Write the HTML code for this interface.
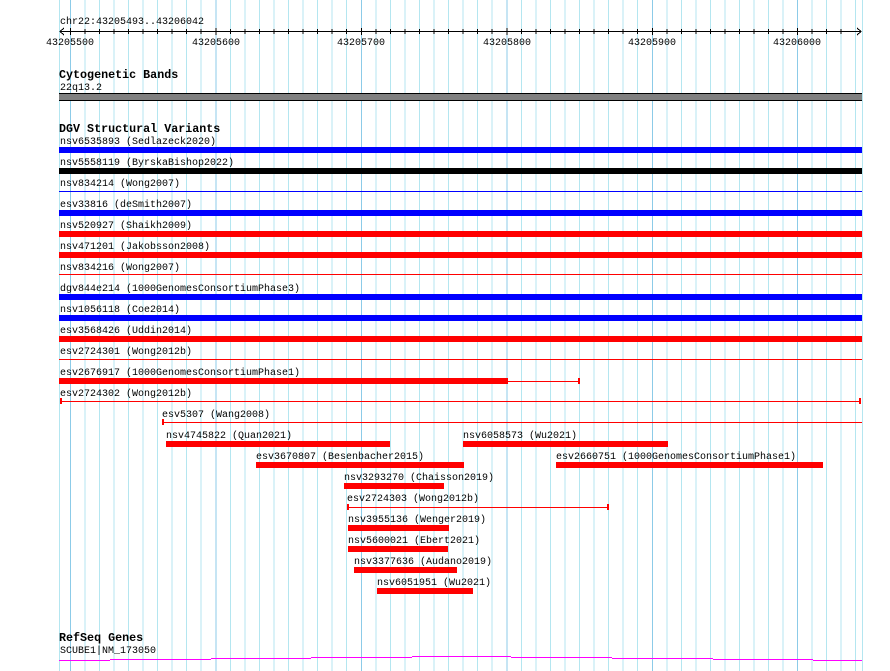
<!DOCTYPE html>
<html><head><meta charset="utf-8"><style>
html,body{margin:0;padding:0;background:#fff;width:890px;height:671px;overflow:hidden}
svg{display:block}
text{font-family:"Liberation Mono",monospace;font-size:10px;fill:#000}
.b{font-weight:bold;font-size:11.7px}
</style></head><body>
<svg width="890" height="671" viewBox="0 0 890 671" xmlns="http://www.w3.org/2000/svg" shape-rendering="crispEdges">
<g id="grid">
<line x1="59.5" y1="0" x2="59.5" y2="671" stroke="#b4e6f0"/>
<line x1="862.5" y1="0" x2="862.5" y2="671" stroke="#b4e6f0"/>
</g>
<script>
</script>
<g stroke="#b4e6f0">
<line x1="70.5" y1="0" x2="70.5" y2="671" stroke="#8ccbe8"/>
<line x1="85" y1="0" x2="85" y2="671"/><line x1="99.5" y1="0" x2="99.5" y2="671"/><line x1="114" y1="0" x2="114" y2="671"/><line x1="128.5" y1="0" x2="128.5" y2="671"/><line x1="143" y1="0" x2="143" y2="671"/><line x1="157.5" y1="0" x2="157.5" y2="671"/><line x1="172" y1="0" x2="172" y2="671"/><line x1="186.5" y1="0" x2="186.5" y2="671"/><line x1="201" y1="0" x2="201" y2="671"/>
<line x1="216" y1="0" x2="216" y2="671" stroke="#8ccbe8"/>
<line x1="230.5" y1="0" x2="230.5" y2="671"/><line x1="245" y1="0" x2="245" y2="671"/><line x1="259.5" y1="0" x2="259.5" y2="671"/><line x1="274" y1="0" x2="274" y2="671"/><line x1="288.5" y1="0" x2="288.5" y2="671"/><line x1="303" y1="0" x2="303" y2="671"/><line x1="317.5" y1="0" x2="317.5" y2="671"/><line x1="332" y1="0" x2="332" y2="671"/><line x1="346.5" y1="0" x2="346.5" y2="671"/>
<line x1="361.5" y1="0" x2="361.5" y2="671" stroke="#8ccbe8"/>
<line x1="376" y1="0" x2="376" y2="671"/><line x1="390.5" y1="0" x2="390.5" y2="671"/><line x1="405" y1="0" x2="405" y2="671"/><line x1="419.5" y1="0" x2="419.5" y2="671"/><line x1="434" y1="0" x2="434" y2="671"/><line x1="448.5" y1="0" x2="448.5" y2="671"/><line x1="463" y1="0" x2="463" y2="671"/><line x1="477.5" y1="0" x2="477.5" y2="671"/><line x1="492" y1="0" x2="492" y2="671"/>
<line x1="507" y1="0" x2="507" y2="671" stroke="#8ccbe8"/>
<line x1="521.5" y1="0" x2="521.5" y2="671"/><line x1="536" y1="0" x2="536" y2="671"/><line x1="550.5" y1="0" x2="550.5" y2="671"/><line x1="565" y1="0" x2="565" y2="671"/><line x1="579.5" y1="0" x2="579.5" y2="671"/><line x1="594" y1="0" x2="594" y2="671"/><line x1="608.5" y1="0" x2="608.5" y2="671"/><line x1="623" y1="0" x2="623" y2="671"/><line x1="637.5" y1="0" x2="637.5" y2="671"/>
<line x1="652.5" y1="0" x2="652.5" y2="671" stroke="#8ccbe8"/>
<line x1="667" y1="0" x2="667" y2="671"/><line x1="681.5" y1="0" x2="681.5" y2="671"/><line x1="696" y1="0" x2="696" y2="671"/><line x1="710.5" y1="0" x2="710.5" y2="671"/><line x1="725" y1="0" x2="725" y2="671"/><line x1="739.5" y1="0" x2="739.5" y2="671"/><line x1="754" y1="0" x2="754" y2="671"/><line x1="768.5" y1="0" x2="768.5" y2="671"/><line x1="783" y1="0" x2="783" y2="671"/>
<line x1="797.5" y1="0" x2="797.5" y2="671" stroke="#8ccbe8"/>
<line x1="812" y1="0" x2="812" y2="671"/><line x1="826.5" y1="0" x2="826.5" y2="671"/><line x1="841" y1="0" x2="841" y2="671"/><line x1="855.5" y1="0" x2="855.5" y2="671"/>
</g>

<!-- ruler -->
<text x="60" y="24">chr22:43205493..43206042</text>
<line x1="60" y1="31.5" x2="861" y2="31.5" stroke="#000"/>
<path d="M64 28 L60 31.5 L64 35 M857 28 L861 31.5 L857 35" stroke="#000" fill="none"/>
<g stroke="#000">
<line x1="70.5" y1="28" x2="70.5" y2="35"/><line x1="85" y1="29" x2="85" y2="34"/><line x1="99.5" y1="29" x2="99.5" y2="34"/><line x1="114" y1="29" x2="114" y2="34"/><line x1="128.5" y1="29" x2="128.5" y2="34"/><line x1="143" y1="29" x2="143" y2="34"/><line x1="157.5" y1="29" x2="157.5" y2="34"/><line x1="172" y1="29" x2="172" y2="34"/><line x1="186.5" y1="29" x2="186.5" y2="34"/><line x1="201" y1="29" x2="201" y2="34"/>
<line x1="216" y1="28" x2="216" y2="35"/><line x1="230.5" y1="29" x2="230.5" y2="34"/><line x1="245" y1="29" x2="245" y2="34"/><line x1="259.5" y1="29" x2="259.5" y2="34"/><line x1="274" y1="29" x2="274" y2="34"/><line x1="288.5" y1="29" x2="288.5" y2="34"/><line x1="303" y1="29" x2="303" y2="34"/><line x1="317.5" y1="29" x2="317.5" y2="34"/><line x1="332" y1="29" x2="332" y2="34"/><line x1="346.5" y1="29" x2="346.5" y2="34"/>
<line x1="361.5" y1="28" x2="361.5" y2="35"/><line x1="376" y1="29" x2="376" y2="34"/><line x1="390.5" y1="29" x2="390.5" y2="34"/><line x1="405" y1="29" x2="405" y2="34"/><line x1="419.5" y1="29" x2="419.5" y2="34"/><line x1="434" y1="29" x2="434" y2="34"/><line x1="448.5" y1="29" x2="448.5" y2="34"/><line x1="463" y1="29" x2="463" y2="34"/><line x1="477.5" y1="29" x2="477.5" y2="34"/><line x1="492" y1="29" x2="492" y2="34"/>
<line x1="507" y1="28" x2="507" y2="35"/><line x1="521.5" y1="29" x2="521.5" y2="34"/><line x1="536" y1="29" x2="536" y2="34"/><line x1="550.5" y1="29" x2="550.5" y2="34"/><line x1="565" y1="29" x2="565" y2="34"/><line x1="579.5" y1="29" x2="579.5" y2="34"/><line x1="594" y1="29" x2="594" y2="34"/><line x1="608.5" y1="29" x2="608.5" y2="34"/><line x1="623" y1="29" x2="623" y2="34"/><line x1="637.5" y1="29" x2="637.5" y2="34"/>
<line x1="652.5" y1="28" x2="652.5" y2="35"/><line x1="667" y1="29" x2="667" y2="34"/><line x1="681.5" y1="29" x2="681.5" y2="34"/><line x1="696" y1="29" x2="696" y2="34"/><line x1="710.5" y1="29" x2="710.5" y2="34"/><line x1="725" y1="29" x2="725" y2="34"/><line x1="739.5" y1="29" x2="739.5" y2="34"/><line x1="754" y1="29" x2="754" y2="34"/><line x1="768.5" y1="29" x2="768.5" y2="34"/><line x1="783" y1="29" x2="783" y2="34"/>
<line x1="797.5" y1="28" x2="797.5" y2="35"/><line x1="812" y1="29" x2="812" y2="34"/><line x1="826.5" y1="29" x2="826.5" y2="34"/><line x1="841" y1="29" x2="841" y2="34"/>
</g>
<g text-anchor="middle">
<text x="70" y="45">43205500</text><text x="216" y="45">43205600</text><text x="361" y="45">43205700</text><text x="507" y="45">43205800</text><text x="652" y="45">43205900</text><text x="797" y="45">43206000</text>
</g>

<!-- cytoband -->
<text class="b" x="59" y="78">Cytogenetic Bands</text>
<text x="60" y="90">22q13.2</text>
<rect x="59" y="93" width="803" height="8" fill="#000"/>
<rect x="59" y="94" width="803" height="6" fill="#808080"/>

<!-- DGV -->
<text class="b" x="59" y="132">DGV Structural Variants</text>
<text x="60" y="144">nsv6535893 (Sedlazeck2020)</text>
<rect x="59" y="147" width="803" height="6" fill="#0000ff"/>
<text x="60" y="165">nsv5558119 (ByrskaBishop2022)</text>
<rect x="59" y="168" width="803" height="6" fill="#000"/>
<text x="60" y="186">nsv834214 (Wong2007)</text>
<rect x="59" y="191" width="803" height="1" fill="#0000ff"/>
<text x="60" y="207">esv33816 (deSmith2007)</text>
<rect x="59" y="210" width="803" height="6" fill="#0000ff"/>
<text x="60" y="228">nsv520927 (Shaikh2009)</text>
<rect x="59" y="231" width="803" height="6" fill="#ff0000"/>
<text x="60" y="249">nsv471201 (Jakobsson2008)</text>
<rect x="59" y="252" width="803" height="6" fill="#ff0000"/>
<text x="60" y="270">nsv834216 (Wong2007)</text>
<rect x="59" y="274" width="803" height="1" fill="#ff0000"/>
<text x="60" y="291">dgv844e214 (1000GenomesConsortiumPhase3)</text>
<rect x="59" y="294" width="803" height="6" fill="#0000ff"/>
<text x="60" y="312">nsv1056118 (Coe2014)</text>
<rect x="59" y="315" width="803" height="6" fill="#0000ff"/>
<text x="60" y="333">esv3568426 (Uddin2014)</text>
<rect x="59" y="336" width="803" height="6" fill="#ff0000"/>
<text x="60" y="354">esv2724301 (Wong2012b)</text>
<rect x="59" y="359" width="803" height="1" fill="#ff0000"/>
<text x="60" y="375">esv2676917 (1000GenomesConsortiumPhase1)</text>
<rect x="59" y="378" width="449" height="6" fill="#ff0000"/>
<rect x="508" y="381" width="71" height="1" fill="#ff0000"/>
<rect x="578" y="378" width="2" height="6" fill="#ff0000"/>
<text x="60" y="396">esv2724302 (Wong2012b)</text>
<rect x="60" y="401" width="801" height="1" fill="#ff0000"/>
<rect x="60" y="398" width="2" height="6" fill="#ff0000"/>
<rect x="859" y="398" width="2" height="6" fill="#ff0000"/>
<text x="162" y="417">esv5307 (Wang2008)</text>
<rect x="162" y="422" width="700" height="1" fill="#ff0000"/>
<rect x="162" y="419" width="2" height="6" fill="#ff0000"/>
<text x="166" y="438">nsv4745822 (Quan2021)</text>
<rect x="166" y="441" width="224" height="6" fill="#ff0000"/>
<text x="463" y="438">nsv6058573 (Wu2021)</text>
<rect x="463" y="441" width="205" height="6" fill="#ff0000"/>
<text x="256" y="459">esv3670807 (Besenbacher2015)</text>
<rect x="256" y="462" width="208" height="6" fill="#ff0000"/>
<text x="556" y="459">esv2660751 (1000GenomesConsortiumPhase1)</text>
<rect x="556" y="462" width="267" height="6" fill="#ff0000"/>
<text x="344" y="480">nsv3293270 (Chaisson2019)</text>
<rect x="344" y="483" width="100" height="6" fill="#ff0000"/>
<text x="347" y="501">esv2724303 (Wong2012b)</text>
<rect x="347" y="507" width="261" height="1" fill="#ff0000"/>
<rect x="347" y="504" width="2" height="6" fill="#ff0000"/>
<rect x="607" y="504" width="2" height="6" fill="#ff0000"/>
<text x="348" y="522">nsv3955136 (Wenger2019)</text>
<rect x="348" y="525" width="101" height="6" fill="#ff0000"/>
<text x="348" y="543">nsv5600021 (Ebert2021)</text>
<rect x="348" y="546" width="100" height="6" fill="#ff0000"/>
<text x="354" y="564">nsv3377636 (Audano2019)</text>
<rect x="354" y="567" width="103" height="6" fill="#ff0000"/>
<text x="377" y="585">nsv6051951 (Wu2021)</text>
<rect x="377" y="588" width="96" height="6" fill="#ff0000"/>

<!-- RefSeq -->
<text class="b" x="59" y="641">RefSeq Genes</text>
<text x="60" y="653">SCUBE1|NM_173050</text>
<path d="M59 660.5 H110 M110 659.5 H211 M211 658.5 H311 M311 657.5 H412 M412 656.5 H511 M511 657.5 H612 M612 658.5 H713 M713 659.5 H813 M813 660.5 H862" stroke="#ff00ff" fill="none"/>
</svg>
</body></html>
